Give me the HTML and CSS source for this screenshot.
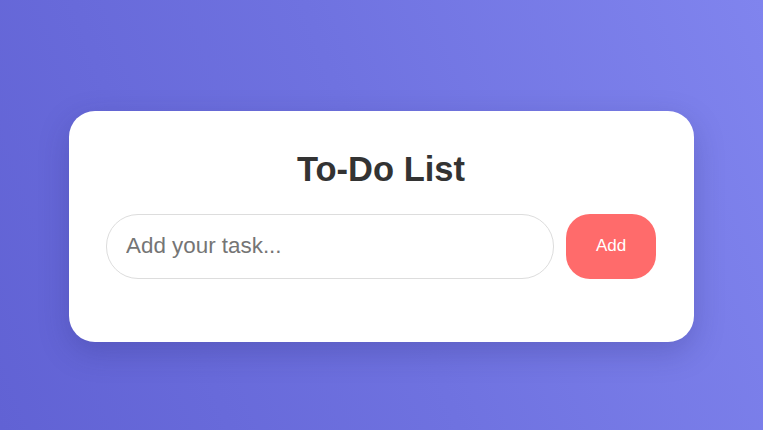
FILE: index.html
```html
<!DOCTYPE html>
<html lang="en">
<head>
<meta charset="utf-8">
<title>To-Do List</title>
<link rel="stylesheet" href="styles.css">
</head>
<body>
<main class="page">
  <section class="card">
    <h1 class="title">To-Do List</h1>
    <form class="row">
      <input class="task-input" type="text" placeholder="Add your task...">
      <button class="add-btn" type="button">Add</button>
    </form>
  </section>
</main>
</body>
</html>
```

FILE: styles.css
```css
* { box-sizing: border-box; }
html, body { margin: 0; padding: 0; }
body {
  width: 763px;
  height: 430px;
  overflow: hidden;
  font-family: "Liberation Sans", Arial, sans-serif;
  background: linear-gradient(70deg, #6162d4 0%, #6f72e0 50%, #8084ee 100%);
}
.page {
  height: 430px;
  padding-top: 22px;
  display: flex;
  align-items: center;
  justify-content: center;
}
.card {
  width: 625px;
  height: 231px;
  background: #fff;
  border-radius: 26px;
  padding: 38px 38px 0 37px;
  box-shadow: 0 10px 30px rgba(40, 40, 110, 0.25);
}
.title {
  margin: 0 0 23px;
  text-align: center;
  font-size: 34.5px;
  line-height: 41px;
  font-weight: 700;
  color: #333;
}
.row {
  display: flex;
  gap: 12px;
  margin: 0;
  padding-top: 1px;
}
.task-input {
  flex: 1;
  height: 65px;
  border: 1px solid #ddd;
  border-radius: 32px;
  padding: 0 19px;
  font-family: "Liberation Sans", Arial, sans-serif;
  font-size: 22.4px;
  color: #333;
  outline: none;
}
.task-input::placeholder { color: #757575; }
.add-btn {
  width: 90px;
  height: 65px;
  border: none;
  border-radius: 24px;
  background: #ff6b6b;
  color: #fff;
  font-family: "Liberation Sans", Arial, sans-serif;
  font-size: 17px;
  cursor: pointer;
}
```
